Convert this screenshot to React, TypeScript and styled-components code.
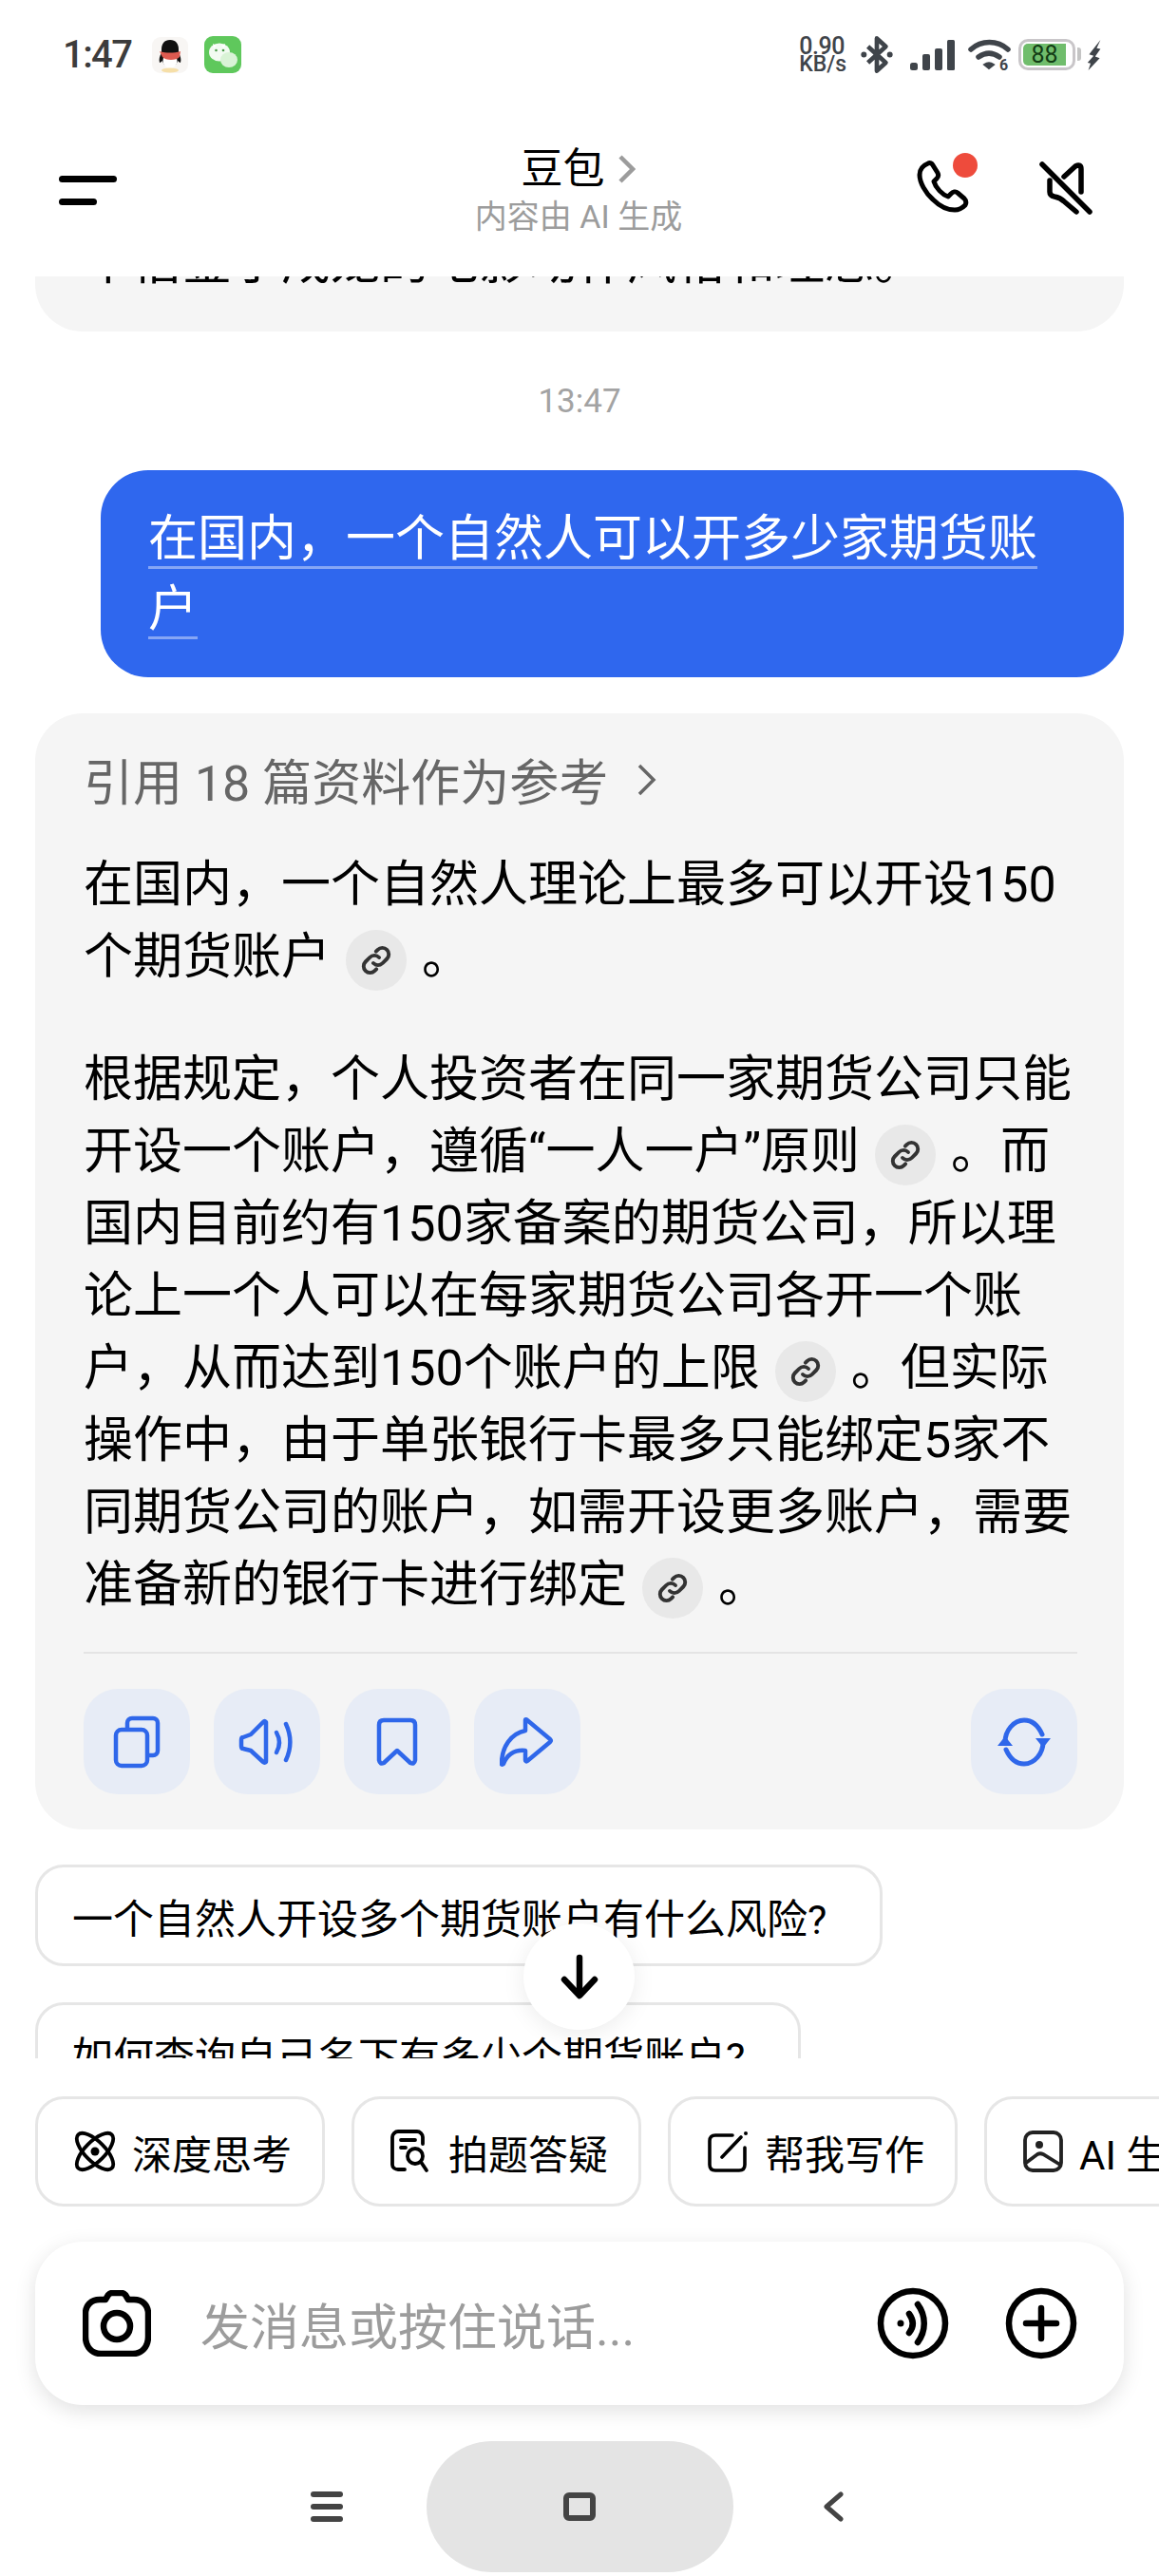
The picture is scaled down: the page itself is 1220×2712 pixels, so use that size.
import React from "react"
import styled, { createGlobalStyle } from "styled-components"

const GlobalStyle = createGlobalStyle`
  html, body {
    margin: 0;
    padding: 0;
    background: #fff;
  }
  * {
    box-sizing: border-box;
  }
`

const Page = styled.div`
  width: 1220px;
  height: 2712px;
  overflow: hidden;
  display: flex;
  flex-direction: column;
  background: #fff;
  color: #000;
  font-family: Roboto, "Noto Sans CJK SC", sans-serif;
`

const StatusBar = styled.div`
  height: 115px;
  flex: none;
  display: flex;
  align-items: center;
  padding: 0 58px 0 66px;
`

const Clock = styled.span`
  font-size: 40px;
  font-weight: 500;
  letter-spacing: -1.6px;
  color: #3c3c3c;
  margin-right: 22px;
`

const AppIcon = styled.svg`
  display: block;
  margin-right: 17px;
`

const StatusRight = styled.div`
  margin-left: auto;
  display: flex;
  align-items: center;
`

const NetSpeed = styled.div`
  display: flex;
  flex-direction: column;
  align-items: flex-start;
  font-weight: 500;
  color: #3f444a;
  margin-right: 13px;
`

const SpeedValue = styled.span`
  font-size: 25px;
  line-height: 20px;
  letter-spacing: -0.4px;
`

const SpeedUnit = styled.span`
  font-size: 23px;
  line-height: 18px;
`

const BatteryBody = styled.div`
  position: relative;
  width: 60px;
  height: 33px;
  margin: 0 10px 0 7px;
  border: 3px solid #c9c6c9;
  border-radius: 10px;
  padding: 2px;
  display: flex;

  &::after {
    content: "";
    position: absolute;
    right: -9px;
    top: 6px;
    width: 4px;
    height: 14px;
    border-radius: 0 3px 3px 0;
    background: #c4c4c4;
  }
`

const BatteryFill = styled.div`
  flex: 1;
  margin-right: 5px;
  background: #70bd6c;
  border-radius: 5px 0 0 5px;
  display: flex;
  align-items: center;
  justify-content: center;
  font-size: 25px;
  line-height: 1;
  color: #123c14;
`

const Header = styled.div`
  height: 176px;
  flex: none;
  position: relative;
  display: grid;
  grid-template-columns: 1fr auto 1fr;
  align-items: center;
  padding: 0 70px 0 62px;
`

const MenuLines = styled.div`
  display: flex;
  flex-direction: column;
  gap: 17px;
  margin-top: -5px;
`

const MenuLine = styled.div<{ $w: number }>`
  width: ${p => p.$w}px;
  height: 7px;
  border-radius: 4px;
  background: #000;
`

const TitleBox = styled.div`
  display: flex;
  flex-direction: column;
  align-items: center;
  margin: -6px 0 0 6px;
`

const TitleRow = styled.div`
  display: flex;
  align-items: center;
  gap: 14px;
  font-size: 44px;
  line-height: 56px;
`

const SubTitle = styled.div`
  font-size: 34px;
  line-height: 44px;
  color: #9c9c9c;
`

const HeaderActions = styled.div`
  justify-self: end;
  display: flex;
  align-items: center;
  gap: 72px;
  margin-top: -10px;
`

const PhoneWrap = styled.div`
  position: relative;
  width: 58px;
  height: 58px;
`

const RedDot = styled.div`
  position: absolute;
  top: -8px;
  right: -7px;
  width: 26px;
  height: 26px;
  border-radius: 50%;
  background: #ee4b3c;
`

const ChatViewport = styled.div`
  height: 1876px;
  flex: none;
  position: relative;
  overflow: hidden;
`

const PrevCard = styled.div`
  height: 58px;
  margin: 0 37px;
  padding: 0 51px;
  overflow: hidden;
  background: #f5f5f5;
  border-radius: 0 0 50px 50px;
  font-size: 52px;
  line-height: 76px;
`

const PrevLine = styled.div`
  margin-top: -52px;
  white-space: nowrap;
`

const TimeLabel = styled.div`
  height: 146px;
  display: flex;
  align-items: center;
  justify-content: center;
  font-size: 35px;
  color: #a3a3a3;
`

const UserBubble = styled.div`
  margin: 0 37px 38px 106px;
  padding: 36px 50px 34px;
  border-radius: 50px;
  background: #2f67ee;
  color: #fff;
  font-size: 52px;
  line-height: 74px;
`

const Underlined = styled.span`
  text-decoration: underline;
  text-decoration-color: rgba(255, 255, 255, 0.42);
  text-decoration-thickness: 3px;
  text-underline-offset: 11px;
`

const AnswerCard = styled.div`
  margin: 0 37px 37px;
  padding: 34px 49px 37px 51px;
  border-radius: 50px;
  background: #f5f5f5;
`

const RefRow = styled.div`
  display: flex;
  align-items: center;
  gap: 30px;
  height: 76px;
  padding-bottom: 5px;
  margin-bottom: 33px;
  font-size: 52px;
  color: #666;
`

const Para = styled.p`
  margin: 0 0 53px;
  width: 1050px;
  font-size: 52px;
  line-height: 76px;
`

const LinkChip = styled.span`
  display: inline-flex;
  align-items: center;
  justify-content: center;
  width: 64px;
  height: 64px;
  margin: 0 16px;
  vertical-align: middle;
  border-radius: 50%;
  background: #e8e8e8;
  color: #333;
`

const Divider = styled.div`
  height: 2px;
  margin-top: -21px;
  background: #e4e4e4;
`

const ActionRow = styled.div`
  display: flex;
  gap: 25px;
  margin-top: 37px;
`

const ActionButton = styled.div<{ $push?: boolean }>`
  width: 112px;
  height: 111px;
  border-radius: 36px;
  display: flex;
  align-items: center;
  justify-content: center;
  background: #e7ecf6;
  color: #2f67ea;
  ${p => (p.$push ? "margin-left: auto;" : "")}
`

const Suggestion = styled.div`
  width: fit-content;
  height: 107px;
  margin: 0 0 38px 37px;
  padding: 0 56px 0 36px;
  display: flex;
  align-items: center;
  border: 3px solid #e6e6e6;
  border-radius: 30px;
  font-size: 43px;
  white-space: nowrap;
`

const ScrollDown = styled.div`
  position: absolute;
  left: 551px;
  top: 1734px;
  width: 117px;
  height: 112px;
  border-radius: 50%;
  display: flex;
  align-items: center;
  justify-content: center;
  background: #fff;
  box-shadow: 0 4px 24px rgba(0, 0, 0, 0.08);
`

const ChipRow = styled.div`
  flex: none;
  display: flex;
  gap: 28px;
  margin: 40px 0 37px 37px;
`

const Chip = styled.div`
  flex: none;
  width: 305px;
  height: 116px;
  padding-left: 38px;
  display: flex;
  align-items: center;
  gap: 17px;
  border: 3px solid #e6e6e6;
  border-radius: 30px;
  font-size: 42px;
  white-space: nowrap;
`

const InputBar = styled.div`
  flex: none;
  height: 172px;
  margin: 0 37px;
  padding: 0 49px 0 50px;
  display: flex;
  align-items: center;
  border-radius: 50px;
  background: #fff;
  box-shadow: 0 6px 22px rgba(0, 0, 0, 0.12);
`

const Placeholder = styled.div`
  flex: 1;
  margin-left: 52px;
  font-size: 52px;
  color: #9c9c9c;
`

const InputIcons = styled.div`
  display: flex;
  align-items: center;
  gap: 59px;
`

const NavBar = styled.div`
  flex: none;
  margin-top: 38px;
  display: grid;
  grid-template-columns: 1fr auto 1fr;
  align-items: center;
`

const NavPill = styled.div`
  width: 323px;
  height: 138px;
  margin: 0 88px;
  border-radius: 69px;
  display: flex;
  align-items: center;
  justify-content: center;
  background: #e4e4e4;
  color: #444;
`

const NavSide = styled.div<{ $end?: boolean }>`
  display: flex;
  color: #444;
  justify-content: ${p => (p.$end ? "flex-end" : "flex-start")};
  padding-left: ${p => (p.$end ? 0 : 6)}px;
`

const QQIcon = () => (
  <AppIcon width="38" height="38" viewBox="0 0 38 38">
    <rect width="38" height="38" rx="9" fill="#f8f6f4" />
    <path d="M19 3c-6 0-9 4-9 10v4c-2 3-3 6-2 10 2-1 2-1 3-2 1 4 4 7 8 7s7-3 8-7c1 1 1 1 3 2 1-4 0-7-2-10v-4c0-6-3-10-9-10z" fill="#111" />
    <ellipse cx="19" cy="25" rx="7.5" ry="8" fill="#fff" />
    <path d="M8 15c7 2 15 2 22 0l-1 6c-3 4-15 4-18 0z" fill="#dc5a50" />
    <ellipse cx="19" cy="35" rx="9" ry="2.5" fill="#f6dfa8" />
  </AppIcon>
)

const WechatIcon = () => (
  <AppIcon width="39" height="39" viewBox="0 0 39 39">
    <rect width="39" height="39" rx="9" fill="#5fc85c" />
    <ellipse cx="16" cy="17" rx="11" ry="9.5" fill="#fff" fillOpacity=".92" />
    <path d="M9 8l4 2-3 3zM22 8l-4 2 3 3z" fill="#fff" />
    <ellipse cx="26" cy="25" rx="9" ry="8" fill="#d9f3d6" />
    <circle cx="12.5" cy="15" r="1.3" fill="#4a9c48" />
    <circle cx="20" cy="15" r="1.3" fill="#4a9c48" />
  </AppIcon>
)

const StatusIcons = () => (
  <>
    <svg width="38" height="41" viewBox="0 0 40 48" fill="none" stroke="#3f444a" strokeWidth="5.500">
      <path d="M9 14l22 20-11 10V4l11 10L9 34" strokeLinejoin="round" />
      <circle cx="4" cy="24" r="3.500" fill="#3f444a" stroke="none" />
      <circle cx="36" cy="24" r="3.500" fill="#3f444a" stroke="none" />
    </svg>
    <svg width="47" height="32" viewBox="0 0 47 32" fill="#3f444a" style={{ margin: "0 14px 0 16px" }}>
      <rect x="0" y="24" width="8" height="8" rx="2.500" />
      <rect x="13" y="15" width="8" height="17" rx="2" />
      <rect x="26" y="9" width="8" height="23" rx="2" />
      <rect x="39" y="0" width="8" height="32" rx="1.500" />
    </svg>
    <svg width="46" height="34" viewBox="0 0 46 34" fill="none" stroke="#3f444a" strokeWidth="5.500" strokeLinecap="round">
      <path d="M3 11c11-10 28-10 39 0" />
      <path d="M11 19c7-5 15-5 22 0" />
      <path d="M17 27l5 4 5-4c-3-2-7-2-10 0z" fill="#3f444a" strokeWidth="2" />
      <text x="33" y="33" fontSize="16" fontWeight="700" fill="#3f444a" stroke="none" fontFamily="Roboto, sans-serif">6</text>
    </svg>
  </>
)

const CopyIcon = () => (
  <svg width="50" height="56" viewBox="0 0 50 56" fill="none" stroke="currentColor" strokeWidth="4.500">
    <rect x="3" y="15" width="33" height="38" rx="6" />
    <path d="M15 14V8a5 5 0 0 1 5-5h22a5 5 0 0 1 5 5v29a5 5 0 0 1-5 5h-5" />
  </svg>
)

const SpeakerIcon = () => (
  <svg width="62" height="54" viewBox="0 0 62 54" fill="none" stroke="currentColor" strokeWidth="4.500" strokeLinejoin="round" strokeLinecap="round">
    <path d="M30 6c-1-1-2-1-3 0L14 19l-8 3c-1 0-2 1-2 3v6c0 2 1 3 2 3l8 2 13 12c1 1 3 1 3-1z" />
    <path d="M41 17c4 7 4 14 0 21" />
    <path d="M51 8c6 13 6 25 0 38" />
  </svg>
)

const BookmarkIcon = () => (
  <svg width="46" height="54" viewBox="0 0 46 54" fill="none" stroke="currentColor" strokeWidth="4.500" strokeLinejoin="round">
    <path d="M4 9q0-5 5-5h28q5 0 5 5v37q-1 5-5 3L23 36 9 49q-4 2-5-3z" />
  </svg>
)

const ShareIcon = () => (
  <svg width="58" height="54" viewBox="0 0 58 54" fill="none" stroke="currentColor" strokeWidth="4.500" strokeLinejoin="round">
    <path d="M27 4c0-1 1-1 2 0l24 20c1 1 1 2 0 3L29 47c-1 1-2 0-2-1V36c-11-1-19 4-23 14-1 1-2 1-2 0 0-18 10-32 25-35z" />
  </svg>
)

const RefreshIcon = () => (
  <svg width="62" height="54" viewBox="0 0 62 54" fill="none" stroke="currentColor" strokeWidth="5" strokeLinecap="round">
    <path d="M11 27C11 15 20 4 31 4c9 0 15 6 19 15" />
    <path d="M51 27c0 12-9 23-20 23-9 0-15-6-19-15" />
    <path d="M3 31l8-10 8 10zM43 23l8 10 8-10z" fill="currentColor" stroke="none" />
  </svg>
)

const LinkGlyph = () => (
  <svg width="36" height="36" viewBox="0 0 24 24" fill="none" stroke="currentColor" strokeWidth="2.600" strokeLinecap="round">
    <path d="M10 14a4.500 4.500 0 0 0 6.500 0l3-3a4.500 4.500 0 0 0-6.400-6.400l-1.200 1.200" />
    <path d="M14 10a4.500 4.500 0 0 0-6.500 0l-3 3a4.500 4.500 0 0 0 6.400 6.400l1.200-1.200" />
  </svg>
)

const Link = () => (
  <LinkChip>
    <LinkGlyph />
  </LinkChip>
)

const AtomIcon = () => (
  <svg width="44" height="44" viewBox="0 0 44 44" fill="none" stroke="#000" strokeWidth="3.800">
    <ellipse cx="22" cy="22" rx="10.500" ry="25" transform="rotate(-45 22 22)" />
    <ellipse cx="22" cy="22" rx="10.500" ry="25" transform="rotate(45 22 22)" />
    <circle cx="22" cy="22" r="4.500" fill="#000" stroke="none" />
  </svg>
)

const DocSearchIcon = () => (
  <svg width="44" height="46" viewBox="0 0 44 46" fill="none" stroke="#000" strokeWidth="3.800" strokeLinecap="round">
    <path d="M15 42H8c-3 0-6-2-6-5V8c0-3 3-6 6-6h20c3 0 6 3 6 6v7" />
    <path d="M11 11h15M11 19h5" />
    <circle cx="26" cy="28" r="8" />
    <path d="M32 34l6 9" />
  </svg>
)

const EditIcon = () => (
  <svg width="44" height="44" viewBox="0 0 44 44" fill="none" stroke="#000" strokeWidth="3.600" strokeLinecap="round">
    <path d="M27 5H9C5 5 3 7 3 11v25c0 4 2 6 6 6h25c4 0 6-2 6-6V18" />
    <path d="M16 28L36 7" />
    <circle cx="41" cy="3" r="2" fill="#000" stroke="none" />
  </svg>
)

const ImageIcon = () => (
  <svg width="42" height="44" viewBox="0 0 42 44" fill="none" stroke="#222" strokeWidth="3.800">
    <rect x="2" y="2" width="38" height="40" rx="8" />
    <circle cx="17" cy="15" r="4" fill="#222" stroke="none" />
    <path d="M3 34l12-9c2-1 4-1 6 0l18 11" />
  </svg>
)

const App = () => {
  return (
    <Page lang="zh-CN">
      <GlobalStyle />
      <StatusBar>
        <Clock>1:47</Clock>
        <QQIcon />
        <WechatIcon />
        <StatusRight>
          <NetSpeed>
            <SpeedValue>0.90</SpeedValue>
            <SpeedUnit>KB/s</SpeedUnit>
          </NetSpeed>
          <StatusIcons />
          <BatteryBody>
            <BatteryFill>88</BatteryFill>
          </BatteryBody>
          <svg width="20" height="32" viewBox="0 0 20 40" fill="#3f444a">
            <path d="M18 0L3 19l6 2-8 9 4 1-3 9 15-16-6-2 7-10-5-1z" />
          </svg>
        </StatusRight>
      </StatusBar>

      <Header>
        <MenuLines>
          <MenuLine $w={61} />
          <MenuLine $w={40} />
        </MenuLines>
        <TitleBox>
          <TitleRow>
            豆包
            <svg width="19" height="30" viewBox="0 0 19 30" fill="none" stroke="#9c9c9c" strokeWidth="4.500">
              <path d="M3 2l13 13L3 28" />
            </svg>
          </TitleRow>
          <SubTitle>内容由 AI 生成</SubTitle>
        </TitleBox>
        <HeaderActions>
          <PhoneWrap>
            <svg width="58" height="58" viewBox="0 0 58 58" fill="none" stroke="#000" strokeWidth="5" strokeLinejoin="round">
              <path d="M13 3c-5 2-9 6-9 12 0 8 6 19 14 26 7 7 15 11 23 11 4 0 8-2 11-5 1-2 1-5-1-7l-7-6c-2-2-5-1-7 1l-3 3c-6-2-13-9-15-16l3-3c2-2 2-4 1-6L18 5c-1-2-3-3-5-2z" />
            </svg>
            <RedDot />
          </PhoneWrap>
          <svg width="56" height="56" viewBox="0 0 56 56" fill="none" stroke="#000" strokeWidth="5.500" strokeLinecap="round" strokeLinejoin="round">
            <path d="M3 3l50 50" />
            <path d="M26 16L38 5q6-3 6 3v24" />
            <path d="M11 20v12q0 4 5 5 6 1 10 5l13 11" />
          </svg>
        </HeaderActions>
      </Header>

      <ChatViewport>
        <PrevCard>
          <PrevLine>中借鉴了成龙的电影动作风格和理念。</PrevLine>
        </PrevCard>
        <TimeLabel>13:47</TimeLabel>
        <UserBubble>
          <Underlined>在国内，一个自然人可以开多少家期货账户</Underlined>
        </UserBubble>
        <AnswerCard>
          <RefRow>
            引用 18 篇资料作为参考
            <svg width="22" height="36" viewBox="0 0 22 36" fill="none" stroke="#666" strokeWidth="3.500">
              <path d="M3 3l15 15L3 33" />
            </svg>
          </RefRow>
          <Para>
            在国内，一个自然人理论上最多可以开设150个期货账户
            <Link />。
          </Para>
          <Para>
            根据规定，个人投资者在同一家期货公司只能开设一个账户，遵循“一人一户”原则
            <Link />
            。而国内目前约有150家备案的期货公司，所以理论上一个人可以在每家期货公司各开一个账户，从而达到150个账户的上限
            <Link />
            。但实际操作中，由于单张银行卡最多只能绑定5家不同期货公司的账户，如需开设更多账户，需要准备新的银行卡进行绑定
            <Link />。
          </Para>
          <Divider />
          <ActionRow>
            <ActionButton>
              <CopyIcon />
            </ActionButton>
            <ActionButton>
              <SpeakerIcon />
            </ActionButton>
            <ActionButton>
              <BookmarkIcon />
            </ActionButton>
            <ActionButton>
              <ShareIcon />
            </ActionButton>
            <ActionButton $push>
              <RefreshIcon />
            </ActionButton>
          </ActionRow>
        </AnswerCard>
        <Suggestion>一个自然人开设多个期货账户有什么风险?</Suggestion>
        <Suggestion>如何查询自己名下有多少个期货账户?</Suggestion>
        <ScrollDown>
          <svg width="42" height="48" viewBox="0 0 42 48" fill="none" stroke="#000" strokeWidth="6.500" strokeLinecap="round" strokeLinejoin="round">
            <path d="M21 4v38" />
            <path d="M5 27l16 17 16-17" />
          </svg>
        </ScrollDown>
      </ChatViewport>

      <ChipRow>
        <Chip>
          <AtomIcon />
          深度思考
        </Chip>
        <Chip>
          <DocSearchIcon />
          拍题答疑
        </Chip>
        <Chip>
          <EditIcon />
          帮我写作
        </Chip>
        <Chip>
          <ImageIcon />
          AI 生图
        </Chip>
      </ChipRow>

      <InputBar>
        <svg width="72" height="70" viewBox="0 0 72 70" fill="none" stroke="#000" strokeWidth="6.500" strokeLinejoin="round">
          <path d="M24 10l3-5c1-1 2-2 4-2h10c2 0 3 1 4 2l3 5h6c9 0 15 6 15 15v24c0 11-7 18-16 18H19C10 67 3 60 3 49V25c0-9 6-15 15-15z" />
          <circle cx="36" cy="38" r="14" />
        </svg>
        <Placeholder>发消息或按住说话...</Placeholder>
        <InputIcons>
          <svg width="76" height="76" viewBox="0 0 76 76" fill="none" stroke="#000" strokeWidth="6.500" strokeLinecap="round">
            <circle cx="38" cy="38" r="34" />
            <circle cx="25" cy="38" r="3.500" fill="#000" stroke="none" />
            <path d="M34 28c5 7 5 14 0 20" />
            <path d="M43 18c9 12 9 28 0 40" />
          </svg>
          <svg width="76" height="76" viewBox="0 0 76 76" fill="none" stroke="#000" strokeWidth="6.500" strokeLinecap="round">
            <circle cx="38" cy="38" r="34" />
            <path d="M38 22v32M22 38h32" />
          </svg>
        </InputIcons>
      </InputBar>

      <NavBar>
        <NavSide $end>
          <svg width="34" height="32" viewBox="0 0 34 32" fill="currentColor">
            <rect width="34" height="6" rx="3" />
            <rect y="13" width="34" height="6" rx="3" />
            <rect y="26" width="34" height="6" rx="3" />
          </svg>
        </NavSide>
        <NavPill>
          <svg width="34" height="30" viewBox="0 0 34 30" fill="none" stroke="currentColor" strokeWidth="6">
            <rect x="3" y="3" width="28" height="24" rx="3" />
          </svg>
        </NavPill>
        <NavSide>
          <svg width="22" height="32" viewBox="0 0 22 32" fill="none" stroke="currentColor" strokeWidth="5" strokeLinecap="round" strokeLinejoin="round">
            <path d="M19 3L4 16l15 13" />
          </svg>
        </NavSide>
      </NavBar>
    </Page>
  )
}

export default App
